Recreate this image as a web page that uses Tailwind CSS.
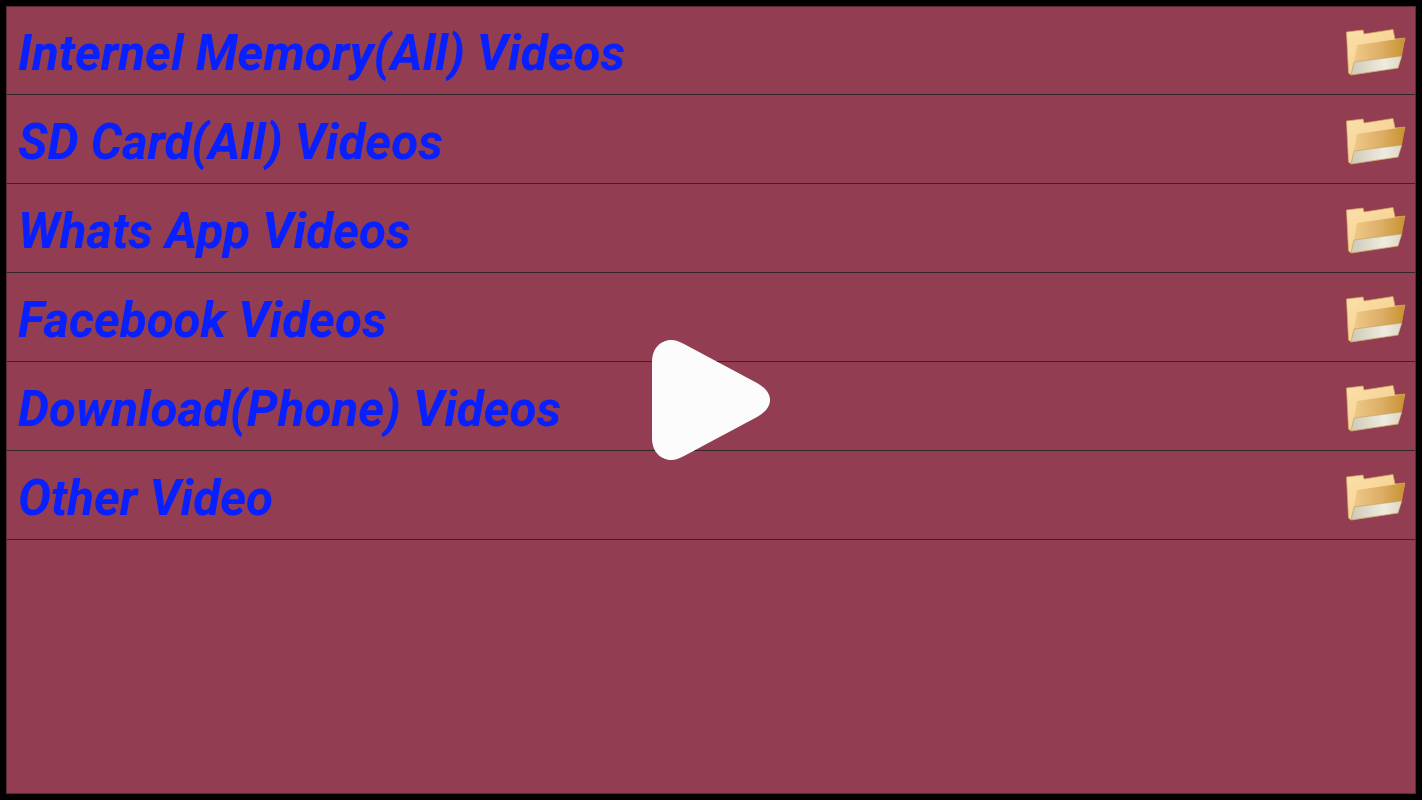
<!DOCTYPE html>
<html>
<head>
<meta charset="utf-8">
<script src="https://cdn.jsdelivr.net/npm/@tailwindcss/browser@4"></script>
</head>
<body class="m-0 bg-black">
<svg width="0" height="0" class="absolute">
  <defs>
    <linearGradient id="back" x1="0" y1="0" x2="1" y2="1"><stop offset="0" stop-color="#fbe0aa"/><stop offset="1" stop-color="#f3c985"/></linearGradient>
    <linearGradient id="front" x1="0" y1="0" x2="1" y2="0"><stop offset="0" stop-color="#efc888"/><stop offset="0.55" stop-color="#dcae66"/><stop offset="1" stop-color="#c8932f"/></linearGradient>
    <linearGradient id="paper" x1="0" y1="0" x2="1" y2="0"><stop offset="0" stop-color="#cfc9b6"/><stop offset="0.65" stop-color="#efebdf"/><stop offset="1" stop-color="#ddd7c4"/></linearGradient>
    <symbol id="folder" viewBox="0 0 60 48">
      <path d="M0.500 3 L17 1 L18 5 L47 0.500 L49 10 L59 9 L52 39 L5 46 L2.500 44 Z" fill="url(#back)" stroke="#d8a860" stroke-width="0.700"/>
      <path d="M11 16 L59 9 L56 27 L8 33 Z" fill="url(#front)"/>
      <path d="M8 33 L56 27 L52 39 L5 46 Z" fill="url(#paper)" stroke="#b5904f" stroke-width="0.500"/>
    </symbol>
  </defs>
</svg>
<div class="relative w-[1422px] h-[800px] overflow-hidden bg-black p-[6px] font-['Roboto',sans-serif]">
  <div class="h-[788px] bg-[#923d52] border-l border-r border-b border-[#5a2a36] shadow-[inset_0_1px_0_#5a2a36] flex flex-col">
    <div class="h-[89px] border-b border-[#33262b] flex items-center justify-between pt-[6px] pl-[11px] pr-[9px]">
      <span class="pt-[2px] text-[49.3px] leading-none font-bold italic text-[#0820ff]">Internel Memory(All) Videos</span>
      <svg class="w-[60px] h-[48px]"><use href="#folder"/></svg>
    </div>
    <div class="h-[89px] border-b border-[#33262b] flex items-center justify-between pt-[6px] pl-[11px] pr-[9px]">
      <span class="pt-[2px] text-[49.3px] leading-none font-bold italic text-[#0820ff]">SD Card(All) Videos</span>
      <svg class="w-[60px] h-[48px]"><use href="#folder"/></svg>
    </div>
    <div class="h-[89px] border-b border-[#33262b] flex items-center justify-between pt-[6px] pl-[11px] pr-[9px]">
      <span class="pt-[2px] text-[49.3px] leading-none font-bold italic text-[#0820ff]">Whats App Videos</span>
      <svg class="w-[60px] h-[48px]"><use href="#folder"/></svg>
    </div>
    <div class="h-[89px] border-b border-[#33262b] flex items-center justify-between pt-[6px] pl-[11px] pr-[9px]">
      <span class="pt-[2px] text-[49.3px] leading-none font-bold italic text-[#0820ff]">Facebook Videos</span>
      <svg class="w-[60px] h-[48px]"><use href="#folder"/></svg>
    </div>
    <div class="h-[89px] border-b border-[#33262b] flex items-center justify-between pt-[6px] pl-[11px] pr-[9px]">
      <span class="pt-[2px] text-[49.3px] leading-none font-bold italic text-[#0820ff]">Download(Phone) Videos</span>
      <svg class="w-[60px] h-[48px]"><use href="#folder"/></svg>
    </div>
    <div class="h-[89px] border-b border-[#33262b] flex items-center justify-between pt-[6px] pl-[11px] pr-[9px]">
      <span class="pt-[2px] text-[49.3px] leading-none font-bold italic text-[#0820ff]">Other Video</span>
      <svg class="w-[60px] h-[48px]"><use href="#folder"/></svg>
    </div>
  </div>
  <svg class="absolute left-[651px] top-[340px] w-[120px] h-[120px]" viewBox="0 0 120 120">
    <path d="M1 22 C1 6 12 0 20 0 C25 0 29 2 33 4 L106 43 C115 48 119 54 119 60 C119 66 115 72 106 77 L33 116 C29 118 25 120 20 120 C12 120 1 114 1 98 Z" fill="#fdfcfd"/>
  </svg>
</div>
</body>
</html>
